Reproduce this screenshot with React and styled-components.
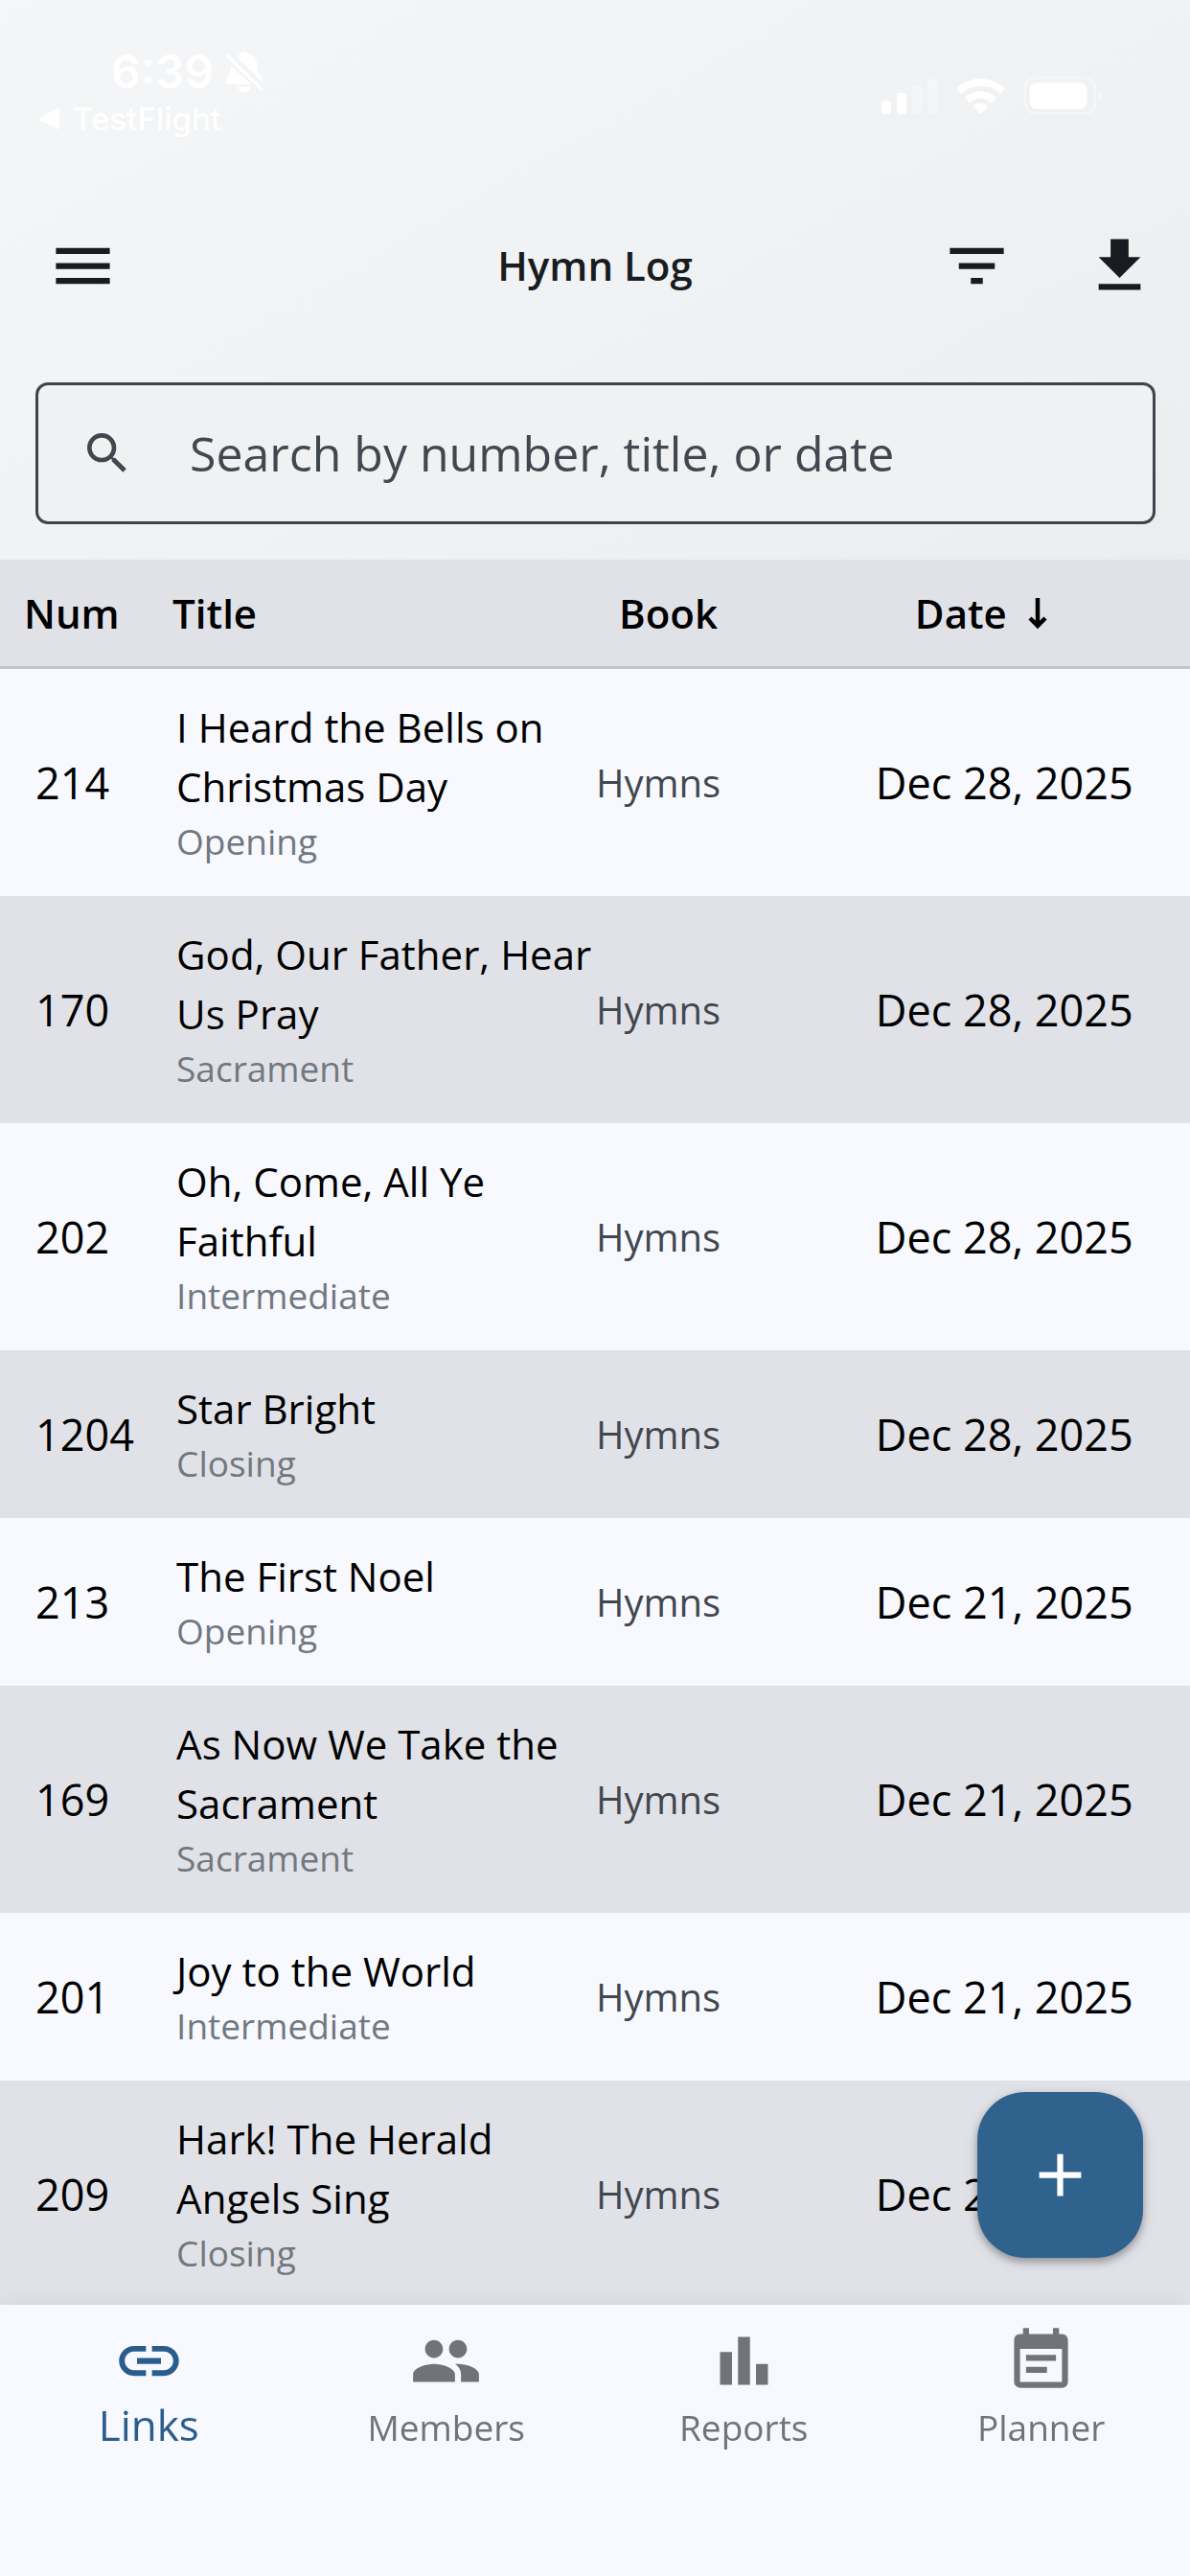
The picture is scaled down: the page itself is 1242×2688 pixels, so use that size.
import React from "react";
import styled, { createGlobalStyle, css } from "styled-components";
import {
  MdAdd,
  MdBarChart,
  MdEventNote,
  MdFileDownload,
  MdFilterList,
  MdLink,
  MdMenu,
  MdPeople,
  MdSearch,
} from "react-icons/md";

const GlobalStyle = createGlobalStyle`
  *, *::before, *::after { box-sizing: border-box; }
  body {
    margin: 0;
    background: #f8f9ff;
    color: #000;
    font-family: "Open Sans", "Noto Sans", sans-serif;
  }
  button, input { font: inherit; color: inherit; }
  button { padding: 0; border: 0; background: none; cursor: pointer; }
`;

const Screen = styled.div`
  display: flex;
  flex-direction: column;
  height: 100vh;
  overflow: hidden;
`;

const Top = styled.header`
  flex: none;
  background: linear-gradient(150deg, #f4f6f8 0%, #f0f1f3 60%, #ecedef 100%);
`;

const StatusBar = styled.div`
  display: flex;
  justify-content: space-between;
  height: 202px;
  padding: 46px 90px 0 40px;
  color: #fff;
  font-family: Inter, sans-serif;
`;

const Clock = styled.div`
  display: flex;
  align-items: center;
  gap: 12px;
  padding-left: 76px;
  font-size: 48px;
  font-weight: 600;
  line-height: 58px;

  svg { width: 40px; height: 42px; }
`;

const BackLink = styled.a`
  display: flex;
  align-items: center;
  gap: 14px;
  color: inherit;
  font-size: 33px;
  font-weight: 500;
  line-height: 40px;
  text-decoration: none;

  svg { width: 22px; height: 22px; }
`;

const Indicators = styled.div`
  display: flex;
  align-items: center;
  gap: 20px;
  height: 108px;

  svg { display: block; height: 40px; }
`;

const AppBar = styled.div`
  display: grid;
  grid-template-columns: 1fr auto 1fr;
  align-items: center;
  height: 150px;
  padding: 0 36px;
  color: #181c20;
`;

const BarGroup = styled.div`
  display: flex;
  gap: 74px;
  justify-content: ${(p) => (p.$end ? "flex-end" : "flex-start")};
  padding-left: ${(p) => (p.$end ? 0 : 13)}px;
`;

const IconButton = styled.button`
  display: flex;

  svg { width: 75px; height: 75px; }
`;

const ScreenTitle = styled.h1`
  margin: 0;
  font-size: 42px;
  font-weight: 600;
  line-height: 62px;
`;

const SearchArea = styled.div`
  padding: 47px 36px 37px 37px;
`;

const SearchBox = styled.label`
  display: flex;
  align-items: center;
  gap: 58px;
  height: 148px;
  padding: 0 44px;
  border: 3px solid #3d444d;
  border-radius: 13px;
  background: #f0f1f3;
  color: #41474f;

  svg { flex: none; width: 56px; height: 56px; }
`;

const SearchInput = styled.input`
  flex: 1;
  min-width: 0;
  padding: 0;
  border: 0;
  outline: 0;
  background: transparent;
  font-size: 50px;
  line-height: 70px;

  &::placeholder { color: #41474f; opacity: 1; }
`;

const List = styled.main`
  flex: 1;
  min-height: 0;
  overflow: hidden;
`;

const Table = styled.table`
  width: 100%;
  table-layout: fixed;
  border-collapse: separate;
  border-spacing: 0;
`;

const Col = styled.col`
  width: ${(p) => p.$width};
`;

const HeadCell = styled.th`
  height: 114px;
  padding: 0 0 0 ${(p) => p.$indent}px;
  border-bottom: 3px solid #bec3cc;
  background: #e1e2e8;
  text-align: left;
`;

const SortButton = styled.button`
  display: flex;
  align-items: center;
  gap: 22px;
  font-size: 42px;
  font-weight: 600;
  line-height: 62px;

  svg { width: 20px; height: 34px; }
`;

const Row = styled.tr`
  background: #f8f9ff;

  &:nth-child(even) { background: #e1e2e8; }
`;

const cell = css`
  padding: 0;
  text-align: left;
  font-size: 45px;
  font-weight: 400;
  line-height: 62px;
  white-space: nowrap;
`;

const NumberCell = styled.td`
  ${cell}
  padding-left: 37px;
`;

const TitleCell = styled.th`
  ${cell}
  padding: 30px 0 31px 4px;
  font-size: 42px;
  white-space: normal;
`;

const Part = styled.div`
  color: #72787f;
  font-size: 37px;
  line-height: 52px;
`;

const BookCell = styled.td`
  ${cell}
  padding-left: 1px;
  color: #41474f;
  font-size: 40px;
`;

const DateCell = styled.td`
  ${cell}
  padding-left: 1px;
`;

const Fab = styled.button`
  position: fixed;
  right: 49px;
  bottom: 332px;
  display: flex;
  align-items: center;
  justify-content: center;
  width: 173px;
  height: 173px;
  border-radius: 50px;
  background: #30628e;
  color: #fff;
  box-shadow: 0 4px 9px rgba(0, 0, 0, 0.3), 0 4px 16px rgba(0, 0, 0, 0.1);

  svg { width: 75px; height: 75px; }
`;

const BottomNav = styled.nav`
  position: relative;
  flex: none;
  display: grid;
  grid-template-columns: repeat(4, 1fr);
  height: 283px;
  padding-top: 21px;
  background: #f8f9ff;
  box-shadow: 0 -2px 20px rgba(0, 0, 0, 0.05);
`;

const NavLink = styled.a`
  display: flex;
  flex-direction: column;
  align-items: center;
  color: ${(p) => (p.$active ? "#2a5d8c" : "#727378")};
  font-size: ${(p) => (p.$active ? 44 : 37)}px;
  line-height: ${(p) => (p.$active ? 58 : 64)}px;
  text-decoration: none;

  svg { width: 75px; height: 75px; }
`;

const hymns = [
  { num: 214, title: "I Heard the Bells on Christmas Day", part: "Opening", date: "Dec 28, 2025" },
  { num: 170, title: "God, Our Father, Hear Us Pray", part: "Sacrament", date: "Dec 28, 2025" },
  { num: 202, title: "Oh, Come, All Ye Faithful", part: "Intermediate", date: "Dec 28, 2025" },
  { num: 1204, title: "Star Bright", part: "Closing", date: "Dec 28, 2025" },
  { num: 213, title: "The First Noel", part: "Opening", date: "Dec 21, 2025" },
  { num: 169, title: "As Now We Take the Sacrament", part: "Sacrament", date: "Dec 21, 2025" },
  { num: 201, title: "Joy to the World", part: "Intermediate", date: "Dec 21, 2025" },
  { num: 209, title: "Hark! The Herald Angels Sing", part: "Closing", date: "Dec 21, 2025" },
];

const columns = [
  { name: "Num", indent: 25, width: "14.5%" },
  { name: "Title", indent: 0, width: "35.5%" },
  { name: "Book", indent: 25, width: "23.5%" },
  { name: "Date", indent: 42, width: "26.5%", sorted: true },
];

const tabs = [
  { name: "Links", Icon: MdLink, active: true },
  { name: "Members", Icon: MdPeople },
  { name: "Reports", Icon: MdBarChart },
  { name: "Planner", Icon: MdEventNote },
];

function BellOff() {
  return (
    <svg viewBox="0 0 40 42" fill="currentColor" aria-hidden="true">
      <path d="M12 5c2-1 3-2 4-3 2-2.500 6-2.500 8 0 6 2 9 6 9.500 13 .3 6 1.500 8 4 11 1.500 2 2 4 1.500 6z" />
      <path d="M6 15l21 19H3c-3 0-3.500-3-1.500-5.500C4 25 5.500 23 6 15z" />
      <path d="M13 36.500h14c-1 3.500-4 5.500-7 5.500s-6-2-7-5.500z" />
      <path d="M2 4l36 35" stroke="currentColor" strokeWidth="3" strokeLinecap="round" />
    </svg>
  );
}

function Signal() {
  return (
    <svg viewBox="0 0 58 40" width="58" fill="currentColor" aria-hidden="true">
      <rect x="0" y="25" width="10" height="14" rx="3" />
      <rect x="16" y="17" width="10" height="22" rx="3" />
      <rect x="32" y="9" width="10" height="30" rx="3" opacity="0.3" />
      <rect x="48" y="2" width="10" height="37" rx="3" opacity="0.3" />
    </svg>
  );
}

function Wifi() {
  return (
    <svg viewBox="0 0 51 40" width="51" fill="currentColor" aria-hidden="true">
      <path d="M0 12.500C14-1.500 37-1.500 51 12.500l-5 5.500C35 7 16 7 5 18z" />
      <path d="M9 22c9-9 24-9 33 0l-5 5.500c-6.500-6.500-16.500-6.500-23 0z" />
      <path d="M18.500 31c4-4 10-4 14 0L25.500 39z" stroke="currentColor" strokeLinejoin="round" />
    </svg>
  );
}

function Battery() {
  return (
    <svg viewBox="0 0 83 40" width="83" fill="currentColor" aria-hidden="true">
      <rect x="1" y="1.500" width="73" height="37" rx="11" fill="none" stroke="currentColor" strokeWidth="2.500" opacity="0.4" />
      <rect x="5.500" y="6" width="60" height="28" rx="8" />
      <path d="M78 14c5 2.500 5 9.500 0 12z" opacity="0.4" />
    </svg>
  );
}

function ArrowDown() {
  return (
    <svg viewBox="0 0 20 34" fill="none" stroke="currentColor" strokeWidth="4.500" aria-hidden="true">
      <path d="M10 1v29M2 22l8 8 8-8" />
    </svg>
  );
}

export default function App() {
  return (
    <Screen>
      <GlobalStyle />
      <Top>
        <StatusBar>
          <div>
            <Clock>
              6:39
              <BellOff />
            </Clock>
            <BackLink href="#testflight">
              <svg viewBox="0 0 22 22" fill="currentColor" aria-hidden="true">
                <path d="M2 9.500L19 .6c1.500-.7 3 .2 3 1.900v17c0 1.700-1.500 2.600-3 1.900L2 12.500c-1.500-.8-1.500-2.200 0-3z" />
              </svg>
              TestFlight
            </BackLink>
          </div>
          <Indicators>
            <Signal />
            <Wifi />
            <Battery />
          </Indicators>
        </StatusBar>
        <AppBar>
          <BarGroup>
            <IconButton aria-label="Open menu"><MdMenu /></IconButton>
          </BarGroup>
          <ScreenTitle>Hymn Log</ScreenTitle>
          <BarGroup $end>
            <IconButton aria-label="Filter"><MdFilterList /></IconButton>
            <IconButton aria-label="Download"><MdFileDownload /></IconButton>
          </BarGroup>
        </AppBar>
        <SearchArea>
          <SearchBox>
            <MdSearch aria-hidden="true" />
            <SearchInput
              type="text"
              aria-label="Search hymns"
              placeholder="Search by number, title, or date"
            />
          </SearchBox>
        </SearchArea>
      </Top>
      <List>
        <Table>
          <colgroup>
            {columns.map((c) => <Col key={c.name} $width={c.width} />)}
          </colgroup>
          <thead>
            <tr>
              {columns.map((c) => (
                <HeadCell
                  key={c.name}
                  scope="col"
                  $indent={c.indent}
                  aria-sort={c.sorted ? "descending" : undefined}
                >
                  <SortButton>
                    {c.name}
                    {c.sorted && <ArrowDown />}
                  </SortButton>
                </HeadCell>
              ))}
            </tr>
          </thead>
          <tbody>
            {hymns.map((h) => (
              <Row key={h.num}>
                <NumberCell>{h.num}</NumberCell>
                <TitleCell scope="row">
                  {h.title}
                  <Part>{h.part}</Part>
                </TitleCell>
                <BookCell>Hymns</BookCell>
                <DateCell>{h.date}</DateCell>
              </Row>
            ))}
          </tbody>
        </Table>
      </List>
      <Fab aria-label="Add hymn"><MdAdd /></Fab>
      <BottomNav>
        {tabs.map(({ name, Icon, active }) => (
          <NavLink
            key={name}
            href={`#${name.toLowerCase()}`}
            $active={active}
            aria-current={active ? "page" : undefined}
          >
            <Icon aria-hidden="true" />
            {name}
          </NavLink>
        ))}
      </BottomNav>
    </Screen>
  );
}
